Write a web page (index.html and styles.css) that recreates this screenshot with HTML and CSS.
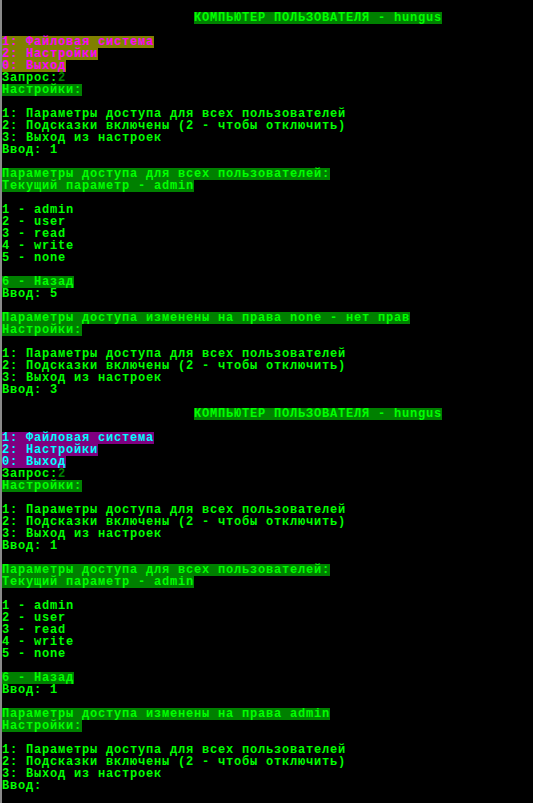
FILE: index.html
```html
<!DOCTYPE html>
<html lang="ru">
<head>
<meta charset="utf-8">
<title>Console</title>
<link rel="stylesheet" href="styles.css">
</head>
<body>
<div class="console">
<div class="line"></div>
<div class="line title"><span class="hl">КОМПЬЮТЕР ПОЛЬЗОВАТЕЛЯ - hungus</span></div>
<div class="line"></div>
<div class="line"><span class="menu-a">1: Файловая система</span></div>
<div class="line"><span class="menu-a">2: Настройки</span></div>
<div class="line"><span class="menu-a">0: Выход</span></div>
<div class="line">Запрос:<span class="dim">2</span></div>
<div class="line"><span class="hl">Настройки:</span></div>
<div class="line"></div>
<div class="line">1: Параметры доступа для всех пользователей</div>
<div class="line">2: Подсказки включены (2 - чтобы отключить)</div>
<div class="line">3: Выход из настроек</div>
<div class="line">Ввод: 1</div>
<div class="line"></div>
<div class="line"><span class="hl">Параметры доступа для всех пользователей:</span></div>
<div class="line"><span class="hl">Текущий параметр - admin</span></div>
<div class="line"></div>
<div class="line">1 - admin</div>
<div class="line">2 - user</div>
<div class="line">3 - read</div>
<div class="line">4 - write</div>
<div class="line">5 - none</div>
<div class="line"></div>
<div class="line"><span class="hl">6 - Назад</span></div>
<div class="line">Ввод: 5</div>
<div class="line"></div>
<div class="line"><span class="hl">Параметры доступа изменены на права none - нет прав</span></div>
<div class="line"><span class="hl">Настройки:</span></div>
<div class="line"></div>
<div class="line">1: Параметры доступа для всех пользователей</div>
<div class="line">2: Подсказки включены (2 - чтобы отключить)</div>
<div class="line">3: Выход из настроек</div>
<div class="line">Ввод: 3</div>
<div class="line"></div>
<div class="line title"><span class="hl">КОМПЬЮТЕР ПОЛЬЗОВАТЕЛЯ - hungus</span></div>
<div class="line"></div>
<div class="line"><span class="menu-b">1: Файловая система</span></div>
<div class="line"><span class="menu-b">2: Настройки</span></div>
<div class="line"><span class="menu-b">0: Выход</span></div>
<div class="line">Запрос:<span class="dim">2</span></div>
<div class="line"><span class="hl">Настройки:</span></div>
<div class="line"></div>
<div class="line">1: Параметры доступа для всех пользователей</div>
<div class="line">2: Подсказки включены (2 - чтобы отключить)</div>
<div class="line">3: Выход из настроек</div>
<div class="line">Ввод: 1</div>
<div class="line"></div>
<div class="line"><span class="hl">Параметры доступа для всех пользователей:</span></div>
<div class="line"><span class="hl">Текущий параметр - admin</span></div>
<div class="line"></div>
<div class="line">1 - admin</div>
<div class="line">2 - user</div>
<div class="line">3 - read</div>
<div class="line">4 - write</div>
<div class="line">5 - none</div>
<div class="line"></div>
<div class="line"><span class="hl">6 - Назад</span></div>
<div class="line">Ввод: 1</div>
<div class="line"></div>
<div class="line"><span class="hl">Параметры доступа изменены на права admin</span></div>
<div class="line"><span class="hl">Настройки:</span></div>
<div class="line"></div>
<div class="line">1: Параметры доступа для всех пользователей</div>
<div class="line">2: Подсказки включены (2 - чтобы отключить)</div>
<div class="line">3: Выход из настроек</div>
<div class="line">Ввод:</div>
</div>
</body>
</html>
```

FILE: styles.css
```css
html, body {
  margin: 0;
  padding: 0;
  background: #000;
}

.console {
  box-sizing: border-box;
  min-height: 100vh;
  border-left: 2px solid #8a8a8a;
  background: #000;
  color: #00ff00;
  font-family: "Liberation Mono", "DejaVu Sans Mono", monospace;
  font-size: 12px;
  letter-spacing: 0.8px;
  font-weight: bold;
  overflow: hidden;
}

.line {
  height: 12px;
  line-height: 12px;
  white-space: pre;
}

.line span {
  display: inline-block;
  height: 12px;
  line-height: 12px;
  vertical-align: top;
}

.title {
  padding-left: 192px;
}

.hl {
  background: #008000;
  color: #00ff00;
}

.menu-a {
  background: #808000;
  color: #ff00ff;
}

.menu-b {
  background: #800080;
  color: #00ffff;
}

.dim {
  color: #008000;
}
```
